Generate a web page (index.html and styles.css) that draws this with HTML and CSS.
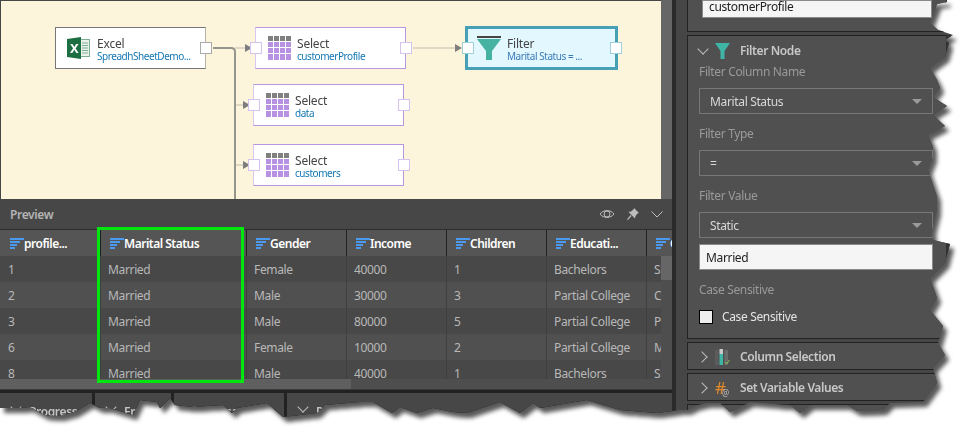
FILE: index.html
```html
<!DOCTYPE html>
<html lang="en">
<head>
    <meta charset="UTF-8">
    <title>Filter Node</title>
    <link rel="stylesheet" href="styles.css">
</head>
<body>
    <svg class="defs" width="0" height="0">
        <symbol id="grid-icon" viewBox="0 0 23 24">
            <g fill="#808080">
                <rect x="0" y="0" width="5" height="5"/><rect x="6" y="0" width="5" height="5"/><rect x="12" y="0" width="5" height="5"/><rect x="18" y="0" width="5" height="5"/>
            </g>
            <g fill="#b892e2">
                <rect x="0" y="6" width="5" height="5"/><rect x="6" y="6" width="5" height="5"/><rect x="12" y="6" width="5" height="5"/><rect x="18" y="6" width="5" height="5"/>
                <rect x="0" y="12" width="5" height="5"/><rect x="6" y="12" width="5" height="5"/><rect x="12" y="12" width="5" height="5"/><rect x="18" y="12" width="5" height="5"/>
                <rect x="0" y="18" width="5" height="6"/><rect x="6" y="18" width="5" height="6"/><rect x="12" y="18" width="5" height="6"/><rect x="18" y="18" width="5" height="6"/>
            </g>
        </symbol>
        <symbol id="sort-icon" viewBox="0 0 14 11">
            <g fill="#4a9bf0">
                <rect x="0" y="0" width="14" height="2"/><rect x="0" y="3" width="10" height="2"/><rect x="0" y="6" width="7" height="2"/><rect x="0" y="9" width="5" height="2"/>
            </g>
        </symbol>
    </svg>

    <div class="shot">
        <div class="app">
            <div class="main">
                <div class="canvas-row">
                    <div class="canvas">
                        <svg class="links" width="660" height="198">
                            <g fill="none" stroke-width="2">
                                <path d="M234 47H246M234 104H246M234 164H246M412 47H456" stroke="#dfd8c4"/>
                                <path d="M212 47H230Q234 47 234 51V198" stroke="#96958c"/>
                            </g>
                            <g fill="#7d7d7d">
                                <path d="M244 43L251 47L244 51Z"/><path d="M242 100L249 104L242 108Z"/><path d="M242 160L249 164L242 168Z"/><path d="M454 43L461 47L454 51Z"/>
                            </g>
                        </svg>

                        <div class="node node-excel">
                            <svg class="node-icon" width="23" height="22" viewBox="0 0 23 22">
                                <rect x="13" y="2.500" width="9.500" height="17" fill="#e9f3ec" stroke="#7fae93"/>
                                <path d="M15 6H21M15 8.500H21M15 11H21M15 13.500H21M15 16H21" stroke="#7fae93"/>
                                <path d="M0 2L14 0V22L0 20Z" fill="#1d6f42"/>
                                <text x="3" y="16" class="excel-x">X</text>
                            </svg>
                            <div class="node-text">
                                <span class="node-title">Excel</span>
                                <span class="node-sub">SpreadhSheetDemo...</span>
                            </div>
                            <span class="port port-out"></span>
                        </div>

                        <div class="node node-select node-s1">
                            <svg class="node-icon" width="23" height="24"><use href="#grid-icon"/></svg>
                            <div class="node-text">
                                <span class="node-title">Select</span>
                                <span class="node-sub">customerProfile</span>
                            </div>
                            <span class="port port-in"></span>
                            <span class="port port-out"></span>
                        </div>

                        <div class="node node-select node-s2">
                            <svg class="node-icon" width="23" height="24"><use href="#grid-icon"/></svg>
                            <div class="node-text">
                                <span class="node-title">Select</span>
                                <span class="node-sub">data</span>
                            </div>
                            <span class="port port-in"></span>
                            <span class="port port-out"></span>
                        </div>

                        <div class="node node-select node-s3">
                            <svg class="node-icon" width="23" height="24"><use href="#grid-icon"/></svg>
                            <div class="node-text">
                                <span class="node-title">Select</span>
                                <span class="node-sub">customers</span>
                            </div>
                            <span class="port port-in"></span>
                            <span class="port port-out"></span>
                        </div>

                        <div class="node node-filter">
                            <svg class="node-icon" width="24" height="24" viewBox="0 0 24 24">
                                <rect width="24" height="2" fill="#444"/>
                                <path d="M0 3H24L15 15V24H9V15Z" fill="#46b2a2"/>
                            </svg>
                            <div class="node-text">
                                <span class="node-title">Filter</span>
                                <span class="node-sub">Marital Status = ...</span>
                            </div>
                            <span class="port port-in"></span>
                            <span class="port port-out"></span>
                        </div>
                    </div>
                    <div class="canvas-scroll"></div>
                </div>

                <div class="preview">
                    <div class="preview-bar">
                        <span class="preview-title">Preview</span>
                        <div class="preview-tools">
                            <svg width="16" height="12" viewBox="0 0 16 12" fill="none" stroke="#bdbdbd">
                                <path d="M1 6C4 1.500 12 1.500 15 6C12 10.500 4 10.500 1 6Z"/>
                                <circle cx="8" cy="6" r="3"/>
                            </svg>
                            <svg width="12" height="12" viewBox="0 0 12 12" fill="#bdbdbd">
                                <path d="M7 0L12 5L10.500 5.500L8.500 8L8 10.500L1.500 4L4 3.500L6.500 1.500Z"/>
                                <path d="M3.500 7L4.500 8L1 12L0 11.500Z"/>
                            </svg>
                            <svg width="12" height="7" viewBox="0 0 12 7" fill="none" stroke="#bdbdbd">
                                <path d="M0.500 0.500L6 6L11.500 0.500"/>
                            </svg>
                        </div>
                    </div>

                    <div class="grid-row grid-head">
                        <div class="cell"><svg width="14" height="11"><use href="#sort-icon"/></svg>profile...</div>
                        <div class="cell"><svg width="14" height="11"><use href="#sort-icon"/></svg>Marital Status</div>
                        <div class="cell"><svg width="14" height="11"><use href="#sort-icon"/></svg>Gender</div>
                        <div class="cell"><svg width="14" height="11"><use href="#sort-icon"/></svg>Income</div>
                        <div class="cell"><svg width="14" height="11"><use href="#sort-icon"/></svg>Children</div>
                        <div class="cell"><svg width="14" height="11"><use href="#sort-icon"/></svg>Educati...</div>
                        <div class="cell"><svg width="14" height="11"><use href="#sort-icon"/></svg>Occupation</div>
                    </div>

                    <div class="grid-body">
                        <div class="grid-rows">
                            <div class="grid-row"><div class="cell">1</div><div class="cell">Married</div><div class="cell">Female</div><div class="cell">40000</div><div class="cell">1</div><div class="cell">Bachelors</div><div class="cell">Skilled</div></div>
                            <div class="grid-row"><div class="cell">2</div><div class="cell">Married</div><div class="cell">Male</div><div class="cell">30000</div><div class="cell">3</div><div class="cell">Partial College</div><div class="cell">Clerical</div></div>
                            <div class="grid-row"><div class="cell">3</div><div class="cell">Married</div><div class="cell">Male</div><div class="cell">80000</div><div class="cell">5</div><div class="cell">Partial College</div><div class="cell">Professional</div></div>
                            <div class="grid-row"><div class="cell">6</div><div class="cell">Married</div><div class="cell">Female</div><div class="cell">10000</div><div class="cell">2</div><div class="cell">Partial College</div><div class="cell">Manual</div></div>
                            <div class="grid-row"><div class="cell">8</div><div class="cell">Married</div><div class="cell">Male</div><div class="cell">40000</div><div class="cell">1</div><div class="cell">Bachelors</div><div class="cell">Skilled</div></div>
                        </div>
                        <div class="v-scroll"><div class="v-thumb"></div></div>
                    </div>
                    <div class="h-scroll"><div class="h-thumb"></div></div>
                    <div class="highlight"></div>
                </div>

                <div class="tabs">
                    <div class="tab tab-a"><span class="chev-down"></span>Progress</div>
                    <div class="tab tab-b"><span class="chev-down"></span>Errors</div>
                    <div class="tab tab-c"><span class="chev-down"></span>Messages</div>
                    <div class="tab tab-d"><span class="chev-down"></span>Properties</div>
                </div>
            </div>

            <div class="gutter"></div>

            <div class="side">
                <section class="box box-name">
                    <div class="field-input">customerProfile</div>
                </section>

                <section class="box box-filter">
                    <div class="box-head">
                        <span class="chev-down"></span>
                        <svg width="15" height="16" viewBox="0 0 15 16"><path d="M0 0H15L9.500 8V16H5.500V8Z" fill="#3fb5a5"/></svg>
                        <span>Filter Node</span>
                    </div>
                    <div class="field-label">Filter Column Name</div>
                    <div class="select">Marital Status</div>
                    <div class="field-label">Filter Type</div>
                    <div class="select">=</div>
                    <div class="field-label">Filter Value</div>
                    <div class="select select-tight">Static</div>
                    <div class="field-input field-value">Married</div>
                    <div class="field-label label-case">Case Sensitive</div>
                    <label class="check"><span class="check-box"></span>Case Sensitive</label>
                </section>

                <section class="box box-closed">
                    <div class="box-head">
                        <span class="chev-right"></span>
                        <svg width="15" height="16" viewBox="0 0 15 16">
                            <rect x="0" y="1" width="3.500" height="15" fill="#5c5c5c"/>
                            <rect x="4.500" y="0" width="3.500" height="5" fill="#c9c9c9"/>
                            <rect x="4.500" y="5" width="3.500" height="11" fill="#3fb5a5"/>
                            <rect x="9.500" y="1" width="3.500" height="15" fill="#6a6a6a"/>
                            <path d="M10 13L11.500 15L14.500 11" fill="none" stroke="#8cc152"/>
                        </svg>
                        <span>Column Selection</span>
                    </div>
                </section>

                <section class="box box-closed">
                    <div class="box-head">
                        <span class="chev-right"></span>
                        <span class="var-icon">#<small>@</small></span>
                        <span>Set Variable Values</span>
                    </div>
                </section>

                <section class="box box-rest"></section>
            </div>
        </div>
    </div>
</body>
</html>
```

FILE: styles.css
```css
* {
    margin: 0;
    padding: 0;
    box-sizing: border-box;
}

body {
    width: 974px;
    height: 441px;
    background-color: #ffffff;
    font-family: "Noto Sans", "Open Sans", sans-serif;
    font-size: 12px;
    letter-spacing: -0.35px;
    overflow: hidden;
}

.defs {
    position: absolute;
}

/* torn paper edge + its shadow */
.shot {
    width: 960px;
    height: 425px;
    filter: drop-shadow(4px 5px 2px rgba(0, 0, 0, 0.65));
}

.app {
    width: 960px;
    height: 425px;
    display: flex;
    background-color: #464646;
    clip-path: polygon(0 0, 947px 0, 947px 2px, 937px 4px, 935px 10px, 930px 23px, 938px 30px, 953px 35px, 945px 40px, 949px 43px, 945px 57px, 930px 68px, 937px 80px, 940px 88px, 933px 97px, 947px 106px, 933px 115px, 945px 126px, 928px 135px, 933px 147px, 933px 157px, 928px 170px, 937px 197px, 937px 210px, 932px 230px, 933px 240px, 950px 244px, 945px 263px, 930px 278px, 937px 298px, 930px 310px, 943px 326px, 938px 343px, 945px 355px, 933px 368px, 937px 383px, 923px 402px, 890px 403px, 883px 410px, 857px 411px, 847px 405px, 810px 405px, 800px 413px, 790px 405px, 750px 402px, 730px 412px, 720px 403px, 707px 403px, 697px 405px, 687px 410px, 680px 410px, 657px 413px, 620px 410px, 587px 400px, 540px 408px, 533px 403px, 520px 413px, 500px 402px, 467px 413px, 453px 412px, 433px 408px, 417px 413px, 400px 407px, 392px 413px, 373px 402px, 360px 402px, 325px 405px, 317px 413px, 283px 417px, 267px 403px, 237px 408px, 232px 413px, 223px 405px, 193px 407px, 175px 405px, 170px 398px, 160px 408px, 157px 402px, 140px 400px, 133px 415px, 110px 408px, 100px 408px, 90px 403px, 75px 412px, 60px 416px, 45px 415px, 30px 407px, 17px 408px, 0 408px);
}

.main {
    width: 672px;
    flex-shrink: 0;
}

.gutter {
    width: 4px;
    background-color: #2b2b2b;
    flex-shrink: 0;
}

/* canvas */
.canvas-row {
    display: flex;
    height: 199px;
}

.canvas {
    position: relative;
    flex: 1;
    margin: 1px 0 0 1px;
    background-color: #fdf4dc;
}

.canvas-scroll {
    width: 11px;
    background-color: #666666;
}

.links {
    position: absolute;
    left: 0;
    top: 0;
}

.node {
    position: absolute;
    width: 151px;
    height: 42px;
    display: flex;
    align-items: center;
    background-color: #ffffff;
    border: 1px solid #777777;
}

.node-excel {
    left: 54px;
    top: 26px;
    padding-left: 11px;
    gap: 7px;
    border-right-color: #b4b4ac;
}

.node-select {
    padding-left: 12px;
    gap: 6px;
    border-color: #b998e0;
    border-left-color: #d9c7f0;
}

.node-s1 {
    left: 254px;
    top: 26px;
}

.node-s2 {
    left: 252px;
    top: 83px;
}

.node-s3 {
    left: 252px;
    top: 143px;
}

.node-filter {
    left: 464px;
    top: 25px;
    width: 153px;
    height: 44px;
    padding-left: 9px;
    gap: 6px;
    background-color: #e3f8fe;
    border: 3px solid #47a0b5;
}

.node-text {
    display: flex;
    flex-direction: column;
    padding-top: 3px;
    line-height: 12px;
}

.node-title {
    font-size: 12px;
    letter-spacing: -0.2px;
    color: #444444;
}

.node-sub {
    font-size: 10px;
    letter-spacing: -0.45px;
    color: #1477b4;
}

.node-filter .node-sub {
    color: #3a7ab8;
}

.port {
    position: absolute;
    top: 14px;
    width: 12px;
    height: 12px;
    background-color: #ffffff;
    border: 1px solid #aaaaaa;
}

.port-in {
    left: -6px;
}

.port-out {
    right: -7px;
}

.node-select .port {
    border-color: #d5c2ee;
}

.node-filter .port {
    top: 13px;
    border-color: #9fd0dc;
}

/* preview grid */
.preview {
    position: relative;
    background-color: #474747;
}

.preview-bar {
    height: 31px;
    display: flex;
    justify-content: space-between;
    align-items: center;
    padding: 0 9px 0 10px;
    border-bottom: 1px solid #2e2e2e;
}

.preview-title {
    font-weight: 600;
    color: #b4b4b4;
}

.preview-tools {
    display: flex;
    align-items: center;
    gap: 12px;
}

.grid-row {
    display: grid;
    grid-template-columns: 100px 146px repeat(4, 100px) 1fr;
    height: 26px;
    background-color: #484848;
}

.grid-rows .grid-row:nth-child(even) {
    background-color: #505050;
}

.cell {
    display: flex;
    align-items: center;
    padding-left: 7px;
    white-space: nowrap;
    overflow: hidden;
    color: #b8b8b8;
    border-left: 1px solid #3f3f3f;
}

.cell:first-child {
    padding-left: 8px;
    border-left: none;
}

.grid-head {
    background-color: #555555;
}

.grid-head .cell {
    padding-left: 9px;
    font-weight: 600;
    letter-spacing: -0.5px;
    color: #ffffff;
    border-left-color: #222222;
}

.grid-head .cell:first-child {
    padding-left: 10px;
}

.grid-head svg {
    flex-shrink: 0;
}

.grid-body {
    display: flex;
    height: 123px;
    overflow: hidden;
}

.grid-rows {
    flex: 1;
    min-width: 0;
    overflow: hidden;
}

.grid-rows .grid-row {
    width: 672px;
}

.v-scroll {
    width: 11px;
    flex-shrink: 0;
    background-color: #4e4e4e;
}

.v-thumb {
    height: 24px;
    background-color: #666666;
}

.h-scroll {
    height: 11px;
    background-color: #4e4e4e;
    border-bottom: 1px solid #3a3a3a;
}

.h-thumb {
    width: 351px;
    height: 10px;
    background-color: #5f5f5f;
}

.highlight {
    position: absolute;
    left: 97px;
    top: 28px;
    width: 147px;
    height: 156px;
    border: 3px solid #00e60f;
}

/* bottom tabs */
.tabs {
    display: flex;
    height: 35px;
    gap: 3px;
    border-top: 3px solid #222222;
    background-color: #222222;
}

.tab {
    display: flex;
    align-items: flex-start;
    gap: 9px;
    padding: 10px 0 0 12px;
    background-color: #474747;
    font-weight: 600;
    color: #c4c4c4;
}

.tab .chev-down {
    margin-top: 0;
}

.tab-a {
    width: 92px;
}

.tab-b {
    width: 76px;
}

.tab-c {
    width: 110px;
}

.tab-d {
    flex: 1;
}

/* side panel */
.side {
    flex: 1;
    display: flex;
    flex-direction: column;
    gap: 3px;
    padding-left: 11px;
}

.box {
    width: 259px;
    background-color: #505050;
    border: 1px solid #222222;
    border-right: 0;
    box-shadow: 5px 0 0 #333333;
}

.box-name {
    height: 33px;
    margin-top: -1px;
    padding: 0 14px;
}

.field-input {
    height: 18px;
    padding-left: 6px;
    line-height: 12px;
    color: #222222;
    background-color: #f5f5f5;
    border: 1px solid #8a8a8a;
}

.box-filter {
    height: 304px;
    padding: 6px 11px 0;
}

.box-head {
    height: 17px;
    display: flex;
    align-items: center;
    font-weight: 600;
    letter-spacing: -0.4px;
    color: #c8c8c8;
}

.box-head svg {
    margin: 0 10px 0 8px;
}

.chev-down {
    width: 8px;
    height: 8px;
    margin-top: -4px;
    flex-shrink: 0;
    border-right: 1px solid #bbbbbb;
    border-bottom: 1px solid #bbbbbb;
    transform: rotate(45deg);
}

.chev-right {
    width: 8px;
    height: 8px;
    flex-shrink: 0;
    border-right: 1px solid #bbbbbb;
    border-top: 1px solid #bbbbbb;
    transform: rotate(45deg);
}

.field-label {
    margin: 4px 0 8px;
    line-height: 17px;
    color: #9a9a9a;
}

.select {
    position: relative;
    width: 234px;
    height: 26px;
    margin-bottom: 11px;
    padding-left: 10px;
    line-height: 25px;
    color: #d8d8d8;
    border: 1px solid #777777;
}

.select::after {
    content: "";
    position: absolute;
    right: 10px;
    top: 10px;
    border-left: 5px solid transparent;
    border-right: 5px solid transparent;
    border-top: 5px solid #9a9a9a;
}

.select-tight {
    margin-bottom: 6px;
}

.field-value {
    width: 234px;
    height: 26px;
    padding-left: 6px;
    line-height: 25px;
}

.label-case {
    margin-top: 11px;
}

.check {
    display: flex;
    align-items: center;
    gap: 9px;
    margin-top: 10px;
    color: #e4e4e4;
}

.check-box {
    width: 14px;
    height: 14px;
    background-color: #eeeeee;
    border: 1px solid #000000;
}

.box-closed {
    height: 28px;
    padding: 5px 10px 0;
}

.box-closed .box-head svg,
.var-icon {
    margin: 0 10px 0 9px;
}

.var-icon {
    position: relative;
    width: 15px;
    font-size: 17px;
    line-height: 16px;
    font-weight: 400;
    color: #e08a2c;
}

.var-icon small {
    position: absolute;
    left: 7px;
    top: 5px;
    font-size: 8px;
    color: #bdbdbd;
}

.box-rest {
    height: 20px;
}

.excel-x {
    font-size: 13px;
    font-weight: 700;
    fill: #ffffff;
}
```
